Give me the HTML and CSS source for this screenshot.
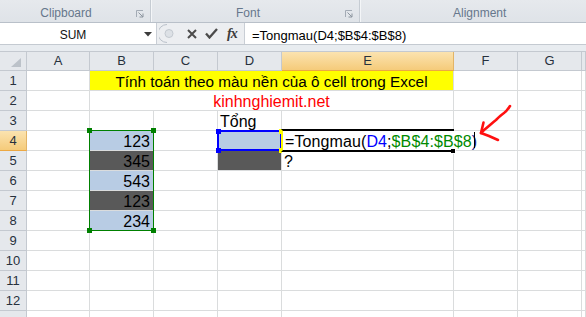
FILE: index.html
```html
<!DOCTYPE html>
<html>
<head>
<meta charset="utf-8">
<link rel="stylesheet" href="styles.css">
</head>
<body>
<div class="ribbon">
  <div class="group g1"><span class="glabel">Clipboard</span><svg class="launcher" width="8" height="8" viewBox="0 0 8 8"><path d="M0.5 7V0.5H7" fill="none" stroke="#a3abb5"/><path d="M2.5 2.5L7 7M7 3.5V7H3.5" fill="none" stroke="#8b949e"/></svg></div>
  <div class="group g2"><span class="glabel">Font</span><svg class="launcher" width="8" height="8" viewBox="0 0 8 8"><path d="M0.5 7V0.5H7" fill="none" stroke="#a3abb5"/><path d="M2.5 2.5L7 7M7 3.5V7H3.5" fill="none" stroke="#8b949e"/></svg></div>
  <div class="group g3"><span class="glabel">Alignment</span></div>
</div>
<div class="fbar">
  <div class="namebox"><span class="nbtext">SUM</span><svg class="dd" width="8" height="5" viewBox="0 0 8 5"><path d="M0 0H8L4 4.5Z" fill="#3c3c3c"/></svg></div>
  <div class="fbtns">
    <svg class="knob" width="16" height="21" viewBox="0 0 16 21"><path d="M8 1.5A9 9 0 0 0 8 19.5" fill="none" stroke="#b9c0c9"/><circle cx="10" cy="10.5" r="4" fill="#dde1e6" stroke="#c3c9d0"/></svg>
    <svg class="ic-x" width="10" height="10" viewBox="0 0 10 10"><path d="M1 1L9 9M9 1L1 9" stroke="#4b4b4b" stroke-width="2"/></svg>
    <svg class="ic-ok" width="13" height="11" viewBox="0 0 13 11"><path d="M1 5.5L4.5 9.5L12 1" fill="none" stroke="#4b4b4b" stroke-width="2.3"/></svg>
    <span class="fx">fx</span>
  </div>
  <div class="finput">=Tongmau(D4;$B$4:$B$8)</div>
</div>
<div class="strip"></div>
<div class="sheet">
  <div class="row head">
    <div class="hd corner"><svg width="26" height="19" viewBox="0 0 26 19"><path d="M21 6V15H11Z" fill="#bcc2c9"/></svg></div>
    <div class="hd">A</div><div class="hd">B</div><div class="hd">C</div><div class="hd">D</div><div class="hd sel">E</div><div class="hd">F</div><div class="hd">G</div><div class="hd"></div>
  </div>
  <div class="row">
    <div class="rh">1</div><div class="c"></div><div class="c merge yl title">Tính toán theo màu nền của ô cell trong Excel</div><div class="c"></div><div class="c"></div><div class="c"></div>
  </div>
  <div class="row">
    <div class="rh">2</div><div class="c"></div><div class="c merge red">kinhnghiemit.net</div><div class="c"></div><div class="c"></div><div class="c"></div>
  </div>
  <div class="row">
    <div class="rh">3</div><div class="c"></div><div class="c"></div><div class="c"></div><div class="c txt">Tổng</div><div class="c"></div><div class="c"></div><div class="c"></div><div class="c"></div>
  </div>
  <div class="row">
    <div class="rh sel">4</div><div class="c"></div><div class="c num lb">123</div><div class="c"></div><div class="c lb"></div><div class="c txt ovf"><span>=Tongmau(</span><span class="ref1">D4</span><span>;</span><span class="ref2">$B$4:$B$8</span><span class="par">)</span></div><div class="c"></div><div class="c"></div><div class="c"></div>
  </div>
  <div class="row">
    <div class="rh">5</div><div class="c"></div><div class="c num dk">345</div><div class="c"></div><div class="c dk"></div><div class="c txt">?</div><div class="c"></div><div class="c"></div><div class="c"></div>
  </div>
  <div class="row">
    <div class="rh">6</div><div class="c"></div><div class="c num lb">543</div><div class="c"></div><div class="c"></div><div class="c"></div><div class="c"></div><div class="c"></div><div class="c"></div>
  </div>
  <div class="row">
    <div class="rh">7</div><div class="c"></div><div class="c num dk">123</div><div class="c"></div><div class="c"></div><div class="c"></div><div class="c"></div><div class="c"></div><div class="c"></div>
  </div>
  <div class="row">
    <div class="rh">8</div><div class="c"></div><div class="c num lb">234</div><div class="c"></div><div class="c"></div><div class="c"></div><div class="c"></div><div class="c"></div><div class="c"></div>
  </div>
  <div class="row">
    <div class="rh">9</div><div class="c"></div><div class="c"></div><div class="c"></div><div class="c"></div><div class="c"></div><div class="c"></div><div class="c"></div><div class="c"></div>
  </div>
  <div class="row">
    <div class="rh">10</div><div class="c"></div><div class="c"></div><div class="c"></div><div class="c"></div><div class="c"></div><div class="c"></div><div class="c"></div><div class="c"></div>
  </div>
  <div class="row">
    <div class="rh">11</div><div class="c"></div><div class="c"></div><div class="c"></div><div class="c"></div><div class="c"></div><div class="c"></div><div class="c"></div><div class="c"></div>
  </div>
  <div class="row">
    <div class="rh">12</div><div class="c"></div><div class="c"></div><div class="c"></div><div class="c"></div><div class="c"></div><div class="c"></div><div class="c"></div><div class="c"></div>
  </div>
  <div class="row">
    <div class="rh"></div><div class="c"></div><div class="c"></div><div class="c"></div><div class="c"></div><div class="c"></div><div class="c"></div><div class="c"></div><div class="c"></div>
  </div>

  <div class="range-green"><i class="h tl"></i><i class="h tr"></i><i class="h bl"></i><i class="h br"></i></div>
  <div class="range-blue"><i class="h tl"></i><i class="h tr"></i><i class="h bl"></i><i class="h br"></i></div>
  <div class="active"></div>
  <div class="fill-handle"></div>
  <div class="caret"></div>
  <svg class="arrow" width="40" height="45" viewBox="0 0 40 45"><path d="M34 6C32 9 31 11 28 13C25 15 23 17 20 20C16 23 12 27 8 30L5 33" fill="none" stroke="#ff1010" stroke-width="2.6" stroke-linecap="round" stroke-linejoin="round"/><path d="M7.5 22.5L5 33L13 36L22 40" fill="none" stroke="#ff1010" stroke-width="2.6" stroke-linecap="round" stroke-linejoin="round"/></svg>
</div>
</body>
</html>
```

FILE: styles.css
```css
* { box-sizing: border-box; }
body {
  margin: 0;
  width: 586px;
  height: 317px;
  overflow: hidden;
  background: #ffffff;
  font-family: "Liberation Sans", Arial, sans-serif;
}

/* Ribbon */
.ribbon {
  display: flex;
  height: 23px;
  background: linear-gradient(#e6e9ed, #dfe3e8);
  border-bottom: 1px solid #b9c0c9;
}
.group {
  display: flex;
  align-items: flex-start;
  border-right: 1px solid #c6ccd3;
  box-shadow: 1px 0 0 #f4f6f8;
}
.g1 { width: 151px; }
.g2 { width: 209px; }
.g3 { flex: 1; border-right: none; box-shadow: none; padding-left: 93px; }
.glabel {
  flex: 1;
  text-align: center;
  padding-top: 6px;
  font-size: 12px;
  line-height: 14px;
  color: #66778c;
}
.g3 .glabel { flex: none; }
.g1 .glabel { padding-right: 4px; }
.launcher { margin: 10px 6px 0 0; }

/* Formula bar */
.fbar {
  display: flex;
  height: 22px;
  background: #ffffff;
  border-bottom: 1px solid #c4cad1;
}
.namebox {
  width: 157px;
  display: flex;
  align-items: flex-start;
  border-right: 1px solid #c9ced5;
}
.nbtext {
  flex: 1;
  text-align: center;
  padding-top: 5px;
  padding-left: 2px;
  font-size: 12px;
  line-height: 15px;
  color: #111;
}
.dd { margin: 9px 4px 0 0; }
.fbtns {
  width: 88px;
  display: flex;
  align-items: center;
  background: #eceef1;
  border-right: 1px solid #c9ced5;
}
.knob { margin-left: 2px; }
.ic-x { margin-left: 12px; }
.ic-ok { margin-left: 8px; }
.fx {
  margin-left: 9px;
  font-family: "Liberation Serif", "Times New Roman", serif;
  font-style: italic;
  font-weight: bold;
  font-size: 14px;
  color: #3b3b3b;
  letter-spacing: -1px;
}
.finput {
  flex: 1;
  padding: 5px 0 0 7px;
  font-size: 13px;
  line-height: 15px;
  color: #000;
  white-space: nowrap;
}
.strip {
  height: 6px;
  background: #e8ecf0;
}

/* Sheet */
.sheet {
  position: relative;
  height: 266px;
  overflow: hidden;
}
.row {
  display: grid;
  grid-template-columns: 27px 63px 64px 64px 64px 172px 64px 64px 1fr;
  height: 20px;
}
.hd, .rh {
  background: #e5e8ec;
  border-right: 1px solid #c4c9d0;
  border-bottom: 1px solid #c4c9d0;
  font-size: 13px;
  color: #27313d;
  text-align: center;
}
.head { border-top: 1px solid #c4c9d0; }
.hd { line-height: 18px; }
.rh { line-height: 19px; }
.corner { padding: 0; overflow: hidden; }
.corner svg { display: block; }
.sel {
  background: linear-gradient(#fbe3b0, #f5cb7a);
  border-bottom-color: #eca843;
  border-right-color: #e2b467;
}
.c {
  border-right: 1px solid #dadcdd;
  border-bottom: 1px solid #dadcdd;
  font-size: 16px;
  line-height: 17px;
  padding-top: 2px;
  color: #000;
  white-space: nowrap;
}
.merge { grid-column: span 4; text-align: center; }
.yl { background: #ffff00; border-right-color: #dadcdd; }
.title { font-size: 15.3px; }
.red { color: #ff0000; }
.num { text-align: right; padding-right: 3px; }
.lb { background: #b8cce4; }
.dk { background: #595959; }
.txt { padding-left: 2px; }
.ovf { overflow: visible; border-right-color: transparent; padding-left: 3px; letter-spacing: 0.1px; }
.ref1 { color: #0000ff; }
.ref2 { color: #008a00; }
.par { color: #1b1b8a; }

/* Overlays */
.range-green {
  position: absolute;
  left: 89px;
  top: 79px;
  width: 65px;
  height: 101px;
  border: 1px solid #008000;
}
.range-blue {
  position: absolute;
  left: 217px;
  top: 79px;
  width: 65px;
  height: 21px;
  border: 2px solid #0000ff;
}
.h {
  position: absolute;
  width: 5px;
  height: 5px;
}
.range-green .h { background: #008000; }
.range-blue .h { background: #0000ff; }
.range-green .tl { left: -3px; top: -3px; }
.range-green .tr { right: -3px; top: -3px; }
.range-green .bl { left: -3px; bottom: -3px; }
.range-green .br { right: -3px; bottom: -3px; }
.range-blue .tl { left: -3.5px; top: -3.5px; }
.range-blue .tr { right: -3.5px; top: -3.5px; }
.range-blue .bl { left: -3.5px; bottom: -3.5px; }
.range-blue .br { right: -3.5px; bottom: -3.5px; }
.range-blue .tr, .range-blue .br { background: #ffff00; width: 3px; right: -2px; }
.active {
  position: absolute;
  left: 281px;
  top: 78px;
  width: 173px;
  height: 23px;
  border-top: 2px solid #000;
  border-bottom: 2px solid #000;
  border-left: 2px solid #ffff00;
}
.fill-handle {
  position: absolute;
  left: 451px;
  top: 98px;
  width: 5px;
  height: 5px;
  background: #000;
  border: 1px solid #fff;
  border-left: none;
  border-top: none;
}
.caret {
  position: absolute;
  left: 474px;
  top: 81px;
  width: 1px;
  height: 16px;
  background: #000;
}
.arrow {
  position: absolute;
  left: 476px;
  top: 49px;
}
```
